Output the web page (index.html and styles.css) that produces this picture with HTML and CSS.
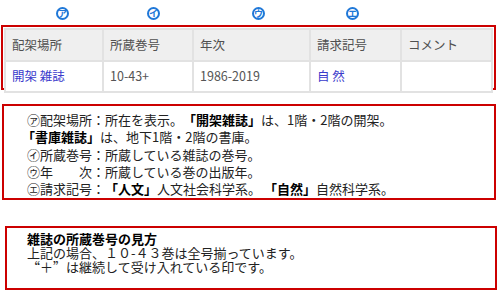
FILE: index.html
```html
<!DOCTYPE html>
<html lang="ja">
<head>
<meta charset="utf-8">
<link rel="stylesheet" href="styles.css">
</head>
<body>
<div class="markers">
  <span class="mk mk1">ア</span>
  <span class="mk mk2">イ</span>
  <span class="mk mk3">ウ</span>
  <span class="mk mk4">エ</span>
</div>
<div class="box table-box">
  <table class="holdings">
    <colgroup>
      <col class="c1"><col class="c2"><col class="c3"><col class="c4"><col class="c5">
    </colgroup>
    <thead>
      <tr><th>配架場所</th><th>所蔵巻号</th><th>年次</th><th>請求記号</th><th>コメント</th></tr>
    </thead>
    <tbody>
      <tr><td class="link">開架 雑誌</td><td>10-43+</td><td>1986-2019</td><td class="link">自 然</td><td></td></tr>
    </tbody>
  </table>
</div>
<div class="box legend">
  <p class="l1">㋐配架場所：所在を表示。<b>「開架雑誌」</b>は、1階・2階の開架。</p>
  <p class="l2"><b>「書庫雑誌」</b>は、地下1階・2階の書庫。</p>
  <p class="l1">㋑所蔵巻号：所蔵している雑誌の巻号。</p>
  <p class="l1">㋒年　　次：所蔵している巻の出版年。</p>
  <p class="l1">㋓請求記号：<b>「人文」</b>人文社会科学系。 <b>「自然」</b>自然科学系。</p>
</div>
<div class="box note">
  <p class="title">雑誌の所蔵巻号の見方</p>
  <p>上記の場合、１０-４３巻は全号揃っています。</p>
  <p><span class="fw">“＋”</span>は継続して受け入れている印です。</p>
</div>
</body>
</html>
```

FILE: styles.css
```css
html, body {
  margin: 0;
  padding: 0;
  background: #ffffff;
  width: 500px;
  height: 299px;
  overflow: hidden;
  font-family: "Noto Sans CJK JP", "Noto Sans", sans-serif;
  text-spacing-trim: space-all;
}

.markers {
  display: flex;
  height: 25px;
  align-items: center;
}
.mk {
  display: flex;
  align-items: center;
  justify-content: center;
  width: 13px;
  height: 13px;
  box-sizing: border-box;
  border: 2px solid #1f78d8;
  border-radius: 50%;
  font-size: 9px;
  line-height: 1;
  color: #1f78d8;
  font-weight: bold;
  margin-top: 1px;
}
.mk1 { margin-left: 56px; }
.mk2 { margin-left: 78px; }
.mk3 { margin-left: 92px; }
.mk4 { margin-left: 81px; }

.box {
  border: 2px solid #cc0000;
  box-sizing: border-box;
}

.table-box {
  margin-left: 1px;
  width: 495px;
  height: 65px;
  padding: 1px 3px 1px 1px;
}

.holdings {
  border-collapse: collapse;
  width: 487px;
  table-layout: fixed;
  font-size: 12.5px;
  color: #555555;
}
.c1 { width: 98px; }
.c2 { width: 90px; }
.c3 { width: 117px; }
.c4 { width: 91px; }
.c5 { width: 91px; }
.holdings th, .holdings td {
  border: 2px solid #e2e2e2;
  text-align: left;
  padding: 0 0 2px 6px;
  white-space: nowrap;
}
.holdings th {
  background: #efefef;
  height: 28px;
  font-weight: normal;
  color: #505050;
}
.holdings td {
  height: 27px;
  background: #ffffff;
}
.holdings td.link {
  color: #3a3acb;
}

.legend {
  margin-top: 14px;
  margin-left: 2px;
  width: 494px;
  height: 96px;
  padding: 5px 0 0 0;
  font-size: 13px;
  color: #222222;
}
.legend p {
  margin: 0;
  line-height: 17.3px;
  white-space: nowrap;
}
.legend .l1 { padding-left: 23px; }
.legend .l2 { padding-left: 18px; }
.legend b { font-weight: bold; color: #000; }

.note {
  margin-top: 26px;
  margin-left: 5px;
  width: 492px;
  height: 64px;
  padding: 4px 0 0 20px;
  font-size: 13px;
  color: #222222;
}
.note p {
  margin: 0;
  line-height: 14px;
  white-space: nowrap;
}
.note .title {
  font-weight: bold;
  color: #000;
}
.fw {
  font-variant-east-asian: full-width;
}
```
